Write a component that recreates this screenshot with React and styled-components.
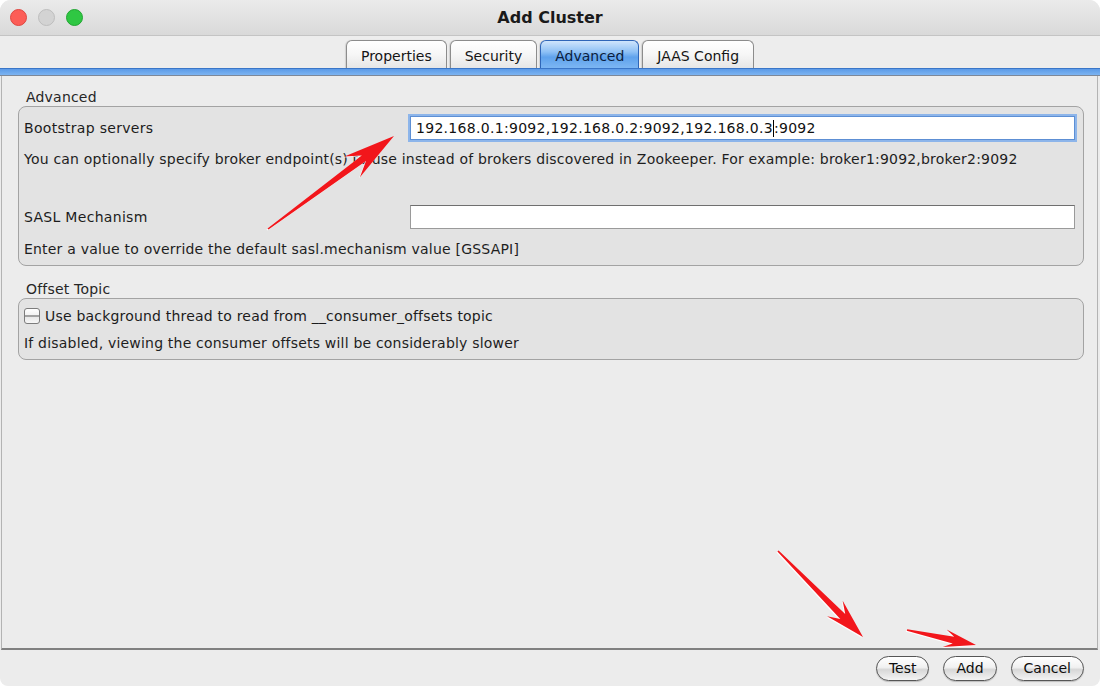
import React from 'react'
import styled, { createGlobalStyle } from 'styled-components'

const GlobalStyle = createGlobalStyle`
  html, body {
    margin: 0;
    padding: 0;
    background: #ffffff;
  }
  body {
    font-family: "DejaVu Sans", "Liberation Sans", sans-serif;
  }
`

const tabs = ['Properties', 'Security', 'Advanced', 'JAAS Config']

// annotation arrows drawn over the dialog: [tail, tip, head length, wing half-width]
const arrows = [
  { from: [268, 229], to: [394, 136], head: 52, wing: 13 },
  { from: [778, 551], to: [863, 637], head: 40, wing: 11 },
  { from: [907, 630], to: [976, 645], head: 32, wing: 9 },
]

function arrowPoints({ from, to, head, wing }) {
  const [x1, y1] = from
  const [x2, y2] = to
  const len = Math.hypot(x2 - x1, y2 - y1)
  const ux = (x2 - x1) / len
  const uy = (y2 - y1) / len
  const px = -uy
  const py = ux
  const neckD = head * 0.72
  const neck = 3.5
  const tail = 0.8
  const nx = x2 - ux * neckD
  const ny = y2 - uy * neckD
  const bx = x2 - ux * head
  const by = y2 - uy * head
  const pts = [
    [x1 + px * tail, y1 + py * tail],
    [nx + px * neck, ny + py * neck],
    [bx + px * wing, by + py * wing],
    [x2, y2],
    [bx - px * wing, by - py * wing],
    [nx - px * neck, ny - py * neck],
    [x1 - px * tail, y1 - py * tail],
  ]
  return pts.map(p => p.map(v => v.toFixed(1)).join(',')).join(' ')
}

const App = () => {
  return (
    <>
      <GlobalStyle />
      <Window>
        <TitleBar>
          <Lights>
            <Light color="#fc5d57" edge="#de4740" />
            <Light color="#d3d3d3" edge="#bdbdbd" />
            <Light color="#2fc743" edge="#22a532" />
          </Lights>
          <Title>Add Cluster</Title>
          <span />
        </TitleBar>

        <TabRow>
          {tabs.map(t => (
            <Tab key={t} active={t === 'Advanced'}>{t}</Tab>
          ))}
        </TabRow>
        <Band />

        <Panel>
          <SectionLabel>Advanced</SectionLabel>
          <GroupBox>
            <FieldRow>
              <FieldLabel>Bootstrap servers</FieldLabel>
              <TextField focused>
                192.168.0.1:9092,192.168.0.2:9092,192.168.0.3<Caret />:9092
              </TextField>
            </FieldRow>
            <Help top={8}>
              You can optionally specify broker endpoint(s) to use instead of brokers discovered in Zookeeper. For example: broker1:9092,broker2:9092
            </Help>
            <FieldRow top={35}>
              <FieldLabel>SASL Mechanism</FieldLabel>
              <TextField />
            </FieldRow>
            <Help top={9}>Enter a value to override the default sasl.mechanism value [GSSAPI]</Help>
          </GroupBox>

          <SectionLabel top={14}>Offset Topic</SectionLabel>
          <GroupBox compact>
            <CheckRow>
              <CheckBox />
              Use background thread to read from __consumer_offsets topic
            </CheckRow>
            <Help top={5}>If disabled, viewing the consumer offsets will be considerably slower</Help>
          </GroupBox>
        </Panel>

        <Footer>
          <Button>Test</Button>
          <Button>Add</Button>
          <Button>Cancel</Button>
        </Footer>

        <Annotations viewBox="0 0 1100 686">
          {arrows.map((a, i) => (
            <polygon key={i} points={arrowPoints(a)} />
          ))}
        </Annotations>
      </Window>
    </>
  )
}

export default App

const Window = styled.div`
  position: relative;
  width: 1100px;
  height: 686px;
  display: flex;
  flex-direction: column;
  background: #ececec;
  border-radius: 11px 11px 8px 8px;
  overflow: hidden;
  font-size: 14px;
  color: #1c1c1c;
`

const TitleBar = styled.div`
  flex: none;
  height: 36px;
  box-sizing: border-box;
  display: grid;
  grid-template-columns: 1fr auto 1fr;
  align-items: center;
  background: linear-gradient(#ebebeb, #d9d9d9);
  border-bottom: 1px solid #c4c4c4;
`

const Lights = styled.div`
  display: flex;
  gap: 11px;
  padding-left: 10px;
`

const Light = styled.span`
  width: 15px;
  height: 15px;
  border-radius: 50%;
  background: ${p => p.color};
  border: 1px solid ${p => p.edge};
`

const Title = styled.div`
  font-weight: bold;
  font-size: 16px;
  color: #1a1a1a;
`

const TabRow = styled.div`
  flex: none;
  height: 32px;
  display: flex;
  justify-content: center;
  align-items: flex-end;
  gap: 3px;
  background: #ededed;
`

const Tab = styled.div`
  height: 28px;
  box-sizing: border-box;
  padding: 2px 14px 0;
  display: flex;
  align-items: center;
  border: 1px solid ${p => (p.active ? '#2f66b8' : '#8c8c8c')};
  border-bottom: none;
  border-radius: 6px 6px 0 0;
  background: ${p =>
    p.active
      ? 'linear-gradient(#cfe5fc 0%, #8fc1f5 40%, #5fa2ec 60%, #7cb6f3 100%)'
      : 'linear-gradient(#ffffff 0%, #f6f6f6 50%, #e6e6e6 100%)'};
  color: ${p => (p.active ? '#0b1d3d' : '#151515')};
  box-shadow: -1px 0 1px rgba(0, 0, 0, 0.12);
  font-size: 14px;
`

const Band = styled.div`
  flex: none;
  height: 8px;
  box-sizing: border-box;
  background: linear-gradient(#5b9ae7, #7cb4f1);
  border-top: 1px solid #3a76c8;
  border-bottom: 1px solid #7d8898;
`

const Panel = styled.div`
  flex: 1;
  margin: 0 2px 0 1px;
  padding: 12px 13px 0 16px;
  border-left: 1px solid #b3b3b3;
  border-right: 1px solid #b3b3b3;
  border-bottom: 2px solid #808080;
  background: #ececec;
  letter-spacing: 0.2px;
`

const SectionLabel = styled.div`
  height: 18px;
  line-height: 18px;
  padding-left: 8px;
  margin-top: ${p => p.top || 0}px;
  color: #262626;
`

const GroupBox = styled.div`
  border: 1px solid #a3a3a3;
  border-radius: 8px;
  background: #e3e3e3;
  padding: ${p => (p.compact ? '5px 8px 6px 5px' : '8px 8px 6px 5px')};
`

const FieldRow = styled.div`
  display: grid;
  grid-template-columns: 386px 1fr;
  align-items: center;
  height: 26px;
  margin-top: ${p => p.top || 0}px;
`

const FieldLabel = styled.div`
  color: #1c1c1c;
  letter-spacing: 0.3px;
`

const TextField = styled.div`
  height: 24px;
  box-sizing: border-box;
  padding: 0 5px;
  display: flex;
  align-items: center;
  background: #ffffff;
  border: 1px solid ${p => (p.focused ? '#5d8fd4' : '#9a9a9a')};
  border-top-color: ${p => (p.focused ? '#5d8fd4' : '#6f6f6f')};
  box-shadow: ${p => (p.focused ? '0 0 0 2px #8db5ea' : 'none')};
  color: #111;
  white-space: pre;
  letter-spacing: 0.3px;
`

const Caret = styled.span`
  display: inline-block;
  width: 1px;
  height: 17px;
  background: #000;
`

const Help = styled.div`
  height: 20px;
  line-height: 20px;
  margin-top: ${p => p.top || 0}px;
  white-space: nowrap;
  color: #1e1e1e;
`

const CheckRow = styled.div`
  height: 24px;
  display: flex;
  align-items: center;
  gap: 5px;
`

const CheckBox = styled.span`
  width: 16px;
  height: 16px;
  box-sizing: border-box;
  border: 1px solid #7c7c7c;
  border-radius: 3px;
  background: linear-gradient(
    #ffffff 0%,
    #f2f2f2 44%,
    #a2a2a2 44%,
    #a2a2a2 54%,
    #e6e6e6 54%,
    #f7f7f7 100%
  );
`

const Footer = styled.div`
  flex: none;
  height: 36px;
  display: flex;
  justify-content: flex-end;
  align-items: center;
  gap: 14px;
  padding-right: 16px;
`

const Button = styled.div`
  height: 25px;
  box-sizing: border-box;
  padding: 0 12px;
  display: flex;
  align-items: center;
  border: 1px solid #555555;
  border-radius: 13px;
  background: linear-gradient(#ffffff 0%, #f1f1f1 45%, #d7d7d7 55%, #f4f4f4 100%);
  box-shadow: 0 1px 1px rgba(0, 0, 0, 0.2);
  color: #0d0d0d;
  font-size: 14px;
`

const Annotations = styled.svg`
  position: absolute;
  left: 0;
  top: 0;
  width: 1100px;
  height: 686px;
  pointer-events: none;
  fill: #f2161b;
  filter: drop-shadow(-1px 1px 0 rgba(255, 255, 255, 0.85));
`
